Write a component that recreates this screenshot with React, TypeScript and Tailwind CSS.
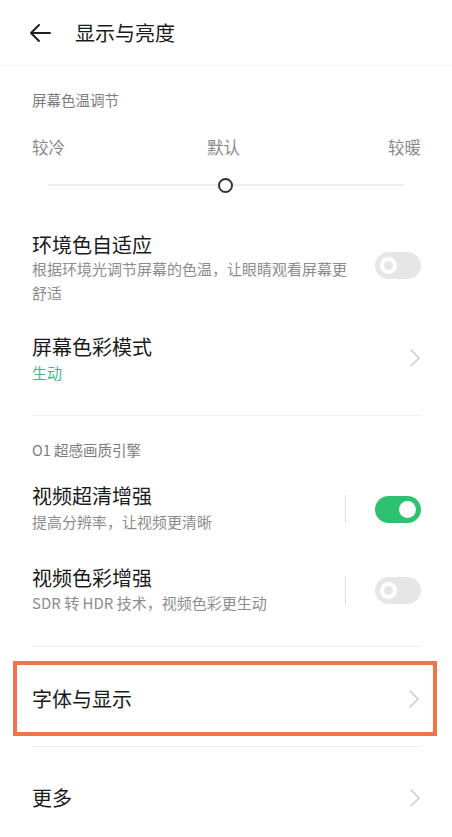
const font = { fontFamily: '"Noto Sans CJK SC", "Noto Sans", sans-serif' };

function Chevron() {
  return (
    <svg width="10" height="18" viewBox="0 0 10 18" fill="none">
      <path d="M1 1l8 8-8 8" stroke="#c6c6c6" strokeWidth="1.4" strokeLinecap="round" strokeLinejoin="round" />
    </svg>
  );
}

function Toggle({ on }: { on?: boolean }) {
  if (on) {
    return (
      <div className="flex h-[27px] w-[46px] items-center justify-end rounded-full bg-[#2fc172] pr-[5px]">
        <div className="h-[17px] w-[17px] rounded-full bg-white" />
      </div>
    );
  }
  return (
    <div className="flex h-[27px] w-[46px] items-center rounded-full bg-[#e6e6e6] pl-[5px]">
      <div className="h-[17px] w-[17px] rounded-full border-[4px] border-white" />
    </div>
  );
}

function Divider() {
  return <div className="mr-[31px] ml-8 h-px bg-[#efefef]" />;
}

export default function App() {
  return (
    <div className="min-h-[837px] w-[452px] bg-white" style={font}>
      <div className="flex h-[66px] items-center border-b border-[#f4f4f4] pl-[28px]">
        <svg width="24" height="22" viewBox="0 0 24 22" fill="none">
          <path d="M22 11H3M11 3l-8 8 8 8" stroke="#1f1f1f" strokeWidth="2" strokeLinecap="round" strokeLinejoin="round" />
        </svg>
        <span className="ml-[23px] text-[20px] text-[#1a1a1a]">显示与亮度</span>
      </div>

      <div className="mt-[14px] flex h-10 items-center pl-8 text-[14.5px] text-[#7c7c7c]">屏幕色温调节</div>

      <div className="mt-[12px] flex h-[30px] items-center justify-between pr-[31px] pl-8 text-[16.5px] text-[#8a8a8a]">
        <span>较冷</span>
        <span className="-ml-[6px]">默认</span>
        <span>较暖</span>
      </div>

      <div className="relative mt-[13px] mr-[48px] ml-[48px] flex h-5 items-center">
        <div className="h-[2px] w-full bg-[#eeeeee]" />
        <div className="absolute left-[170px] h-[15px] w-[15px] rounded-full border-[2.5px] border-[#333] bg-white" />
      </div>

      <div className="mt-[38px] flex items-center justify-between pr-[31px] pl-8">
        <div className="w-[320px]">
          <div className="text-[20px] leading-[24px] text-[#1a1a1a]">环境色自适应</div>
          <div className="text-[15px] leading-[24px] text-[#8c8c8c]">根据环境光调节屏幕的色温，让眼睛观看屏幕更舒适</div>
        </div>
        <div className="-mt-[8px]">
          <Toggle />
        </div>
      </div>

      <div className="mt-[30px] flex items-center justify-between pr-[32px] pl-8">
        <div>
          <div className="text-[20px] leading-[24px] text-[#1a1a1a]">屏幕色彩模式</div>
          <div className="mt-[2px] text-[15px] leading-[24px] text-[#3bbb87]">生动</div>
        </div>
        <div className="-mt-[5px]">
          <Chevron />
        </div>
      </div>

      <div className="mt-[30px]">
        <Divider />
      </div>

      <div className="mt-[14px] flex h-10 items-center pl-8 text-[14.5px] text-[#7c7c7c]">O1 超感画质引擎</div>

      <div className="mt-[14px] flex items-center justify-between pr-[31px] pl-8">
        <div>
          <div className="text-[20px] leading-[24px] text-[#1a1a1a]">视频超清增强</div>
          <div className="mt-[2px] text-[15px] leading-[24px] text-[#8c8c8c]">提高分辨率，让视频更清晰</div>
        </div>
        <div className="flex items-center gap-[29px]">
          <div className="h-[28px] w-px bg-[#dddddd]" />
          <Toggle on />
        </div>
      </div>

      <div className="mt-[32px] flex items-center justify-between pr-[31px] pl-8">
        <div>
          <div className="text-[20px] leading-[24px] text-[#1a1a1a]">视频色彩增强</div>
          <div className="mt-px text-[15px] leading-[24px] text-[#8c8c8c]">SDR 转 HDR 技术，视频色彩更生动</div>
        </div>
        <div className="flex items-center gap-[29px]">
          <div className="h-[28px] w-px bg-[#dddddd]" />
          <Toggle />
        </div>
      </div>

      <div className="mt-[31px]">
        <Divider />
      </div>

      <div className="mt-[14px] mr-[15px] ml-[13px] flex h-[75px] items-center justify-between border-[4px] border-[#f0734a] pr-[14px] pl-[15px]">
        <span className="text-[20px] text-[#1a1a1a]">字体与显示</span>
        <Chevron />
      </div>

      <div className="mt-[10px]">
        <Divider />
      </div>

      <div className="flex h-[101px] items-center justify-between pr-[32px] pl-8">
        <span className="text-[20px] text-[#1a1a1a]">更多</span>
        <Chevron />
      </div>
    </div>
  );
}
